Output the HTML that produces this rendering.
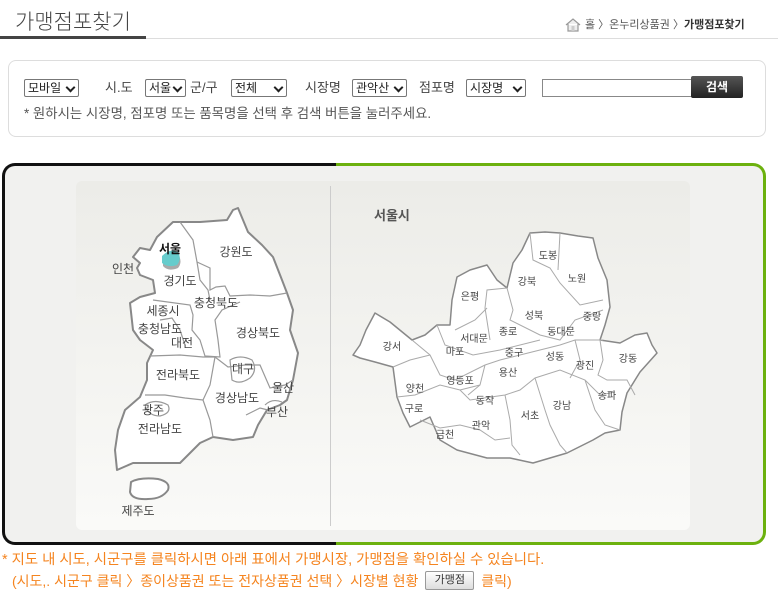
<!DOCTYPE html>
<html><head><meta charset="utf-8">
<style>
*{margin:0;padding:0;box-sizing:border-box}
body{width:778px;height:609px;background:#fff;font-family:"Liberation Sans","Noto Sans CJK KR",sans-serif;position:relative;overflow:hidden;color:#444}
.a{position:absolute;white-space:nowrap}
.sel{position:absolute;top:79px;height:18px;border:1px solid #777;background:#fff;font-size:12px;line-height:16px;padding-left:3px;color:#222;border-radius:2px;overflow:hidden}
.sel:after{content:"";position:absolute;right:4px;top:4px;width:5px;height:5px;border-right:2px solid #222;border-bottom:2px solid #222;transform:rotate(45deg)}
.lb{position:absolute;top:79px;font-size:13px;line-height:18px;color:#444}
svg text{font-family:"Liberation Sans","Noto Sans CJK KR",sans-serif}
</style></head><body>
<div class="a" style="left:15px;top:6px;font-size:21px;color:#444;font-weight:300">가맹점포찾기</div>
<div class="a" style="left:0;top:38px;width:778px;height:1px;background:#ddd"></div>
<div class="a" style="left:0;top:36px;width:146px;height:3px;background:#444"></div>
<svg class="a" style="left:565px;top:17px" width="16" height="16" viewBox="0 0 16 16"><path d="M1 8 L8 2 L15 8 M3 7 V14 H13 V7" fill="#eee" stroke="#999" stroke-width="1.2"/><rect x="6.5" y="9" width="3" height="5" fill="#ccc"/></svg>
<div class="a" style="left:585px;top:17px;font-size:11px;color:#555;line-height:16px">홀 〉온누리상품권 〉<b style="color:#333">가맹점포찾기</b></div>

<div class="a" style="left:8px;top:60px;width:758px;height:77px;border:1px solid #ddd;border-radius:8px"></div>
<div class="sel" style="left:24px;width:55px">모바일</div>
<div class="lb" style="left:105px">시.도</div>
<div class="sel" style="left:145px;width:41px">서울</div>
<div class="lb" style="left:190px">군/구</div>
<div class="sel" style="left:231px;width:56px">전체</div>
<div class="lb" style="left:305px">시장명</div>
<div class="sel" style="left:352px;width:55px">관악산</div>
<div class="lb" style="left:419px">점포명</div>
<div class="sel" style="left:466px;width:60px">시장명</div>
<div class="a" style="left:542px;top:79px;width:150px;height:18px;border:1px solid #888;background:#fff"></div>
<div class="a" style="left:691px;top:76px;width:52px;height:22px;background:linear-gradient(#555,#222);border-radius:2px;color:#fff;font-size:12px;font-weight:bold;text-align:center;line-height:22px">검색</div>
<div class="a" style="left:24px;top:102px;font-size:13.4px;color:#555">* 원하시는 시장명, 점포명 또는 품목명을 선택 후 검색 버튼을 눌러주세요.</div>

<div class="a" style="left:2px;top:163px;width:764px;height:382px;border-radius:13px;background:linear-gradient(90deg,#111 0,#111 334px,#6cb10e 334px);padding:3px">
<div style="width:100%;height:100%;border-radius:10px;background:#f1f1ef"></div></div>
<div class="a" style="left:76px;top:181px;width:614px;height:349px;border-radius:6px;background:linear-gradient(#ecece8,#fafaf8)"></div>
<div class="a" style="left:330px;top:186px;width:1px;height:340px;background:#ccc"></div>

<svg class="a" style="left:0;top:0" width="778" height="609">
<g fill="#fff" stroke="#888" stroke-width="2" stroke-linejoin="round">
<path d="M238 208 L248 232 L262 245 L273 257 L282 280 L287 293 L293 310 L290 330 L298 353 L293 380 L287 400 L280 405 L267 410 L258 425 L253 437 L233 440 L213 437 L200 443 L180 463 L133 463 L117 470 L115 450 L118 430 L125 410 L140 397 L147 380 L147 363 L153 350 L140 340 L133 330 L130 303 L140 297 L155 293 L153 280 L140 275 L137 268 L140 263 L133 257 L140 248 L150 250 L157 237 L173 222 L200 222 L227 220 L233 210 Z"/>
<path d="M131 482 Q140 477 158 479 Q171 482 168 490 Q162 499 148 499 Q132 500 130 492 Z"/>
</g>
<g fill="none" stroke="#999" stroke-width="1.2">
<path d="M180 222 L193 240 L197 262 L200 280 L208 290 L210 300"/>
<path d="M197 262 L210 268 L210 290 L216 287 L225 286 L230 296 L250 295 L270 296 L287 293"/>
<path d="M153 300 L190 305 L193 315 L192 330 L200 340 L205 356 L220 357 L218 340 L215 320 L222 310 L240 302"/>
<path d="M150 356 L180 355 L203 357 L215 357 L228 367 L245 365 L260 365 L270 388 L285 385 L293 380"/>
<path d="M215 357 L210 385 L203 400 L210 420 L213 437"/>
<path d="M145 395 L165 395 L185 398 L203 400"/>
<path d="M160 320 L172 318 L180 330 L185 345"/>
<path d="M230 360 Q240 354 252 360 Q258 370 250 378 Q240 385 232 380 Z"/>
<path d="M145 405 Q155 398 168 405 Q172 413 160 416 Q148 416 145 405 Z"/>
<path d="M265 405 Q272 398 282 402"/>
<path d="M246 415 L260 408 L268 410"/>
</g>
<path d="M163 258 Q170 250 178 254 Q183 262 178 268 Q168 272 163 266 Z" fill="#aaa"/>
<path d="M162 256 Q170 248 178 252 Q182 259 177 265 Q168 268 162 263 Z" fill="#66cccc"/>
<g font-size="12" fill="#444" text-anchor="middle">
<text x="170" y="253" font-weight="bold" fill="#111">서울</text>
<text x="123" y="273">인천</text><text x="236" y="256">강원도</text><text x="180" y="285">경기도</text>
<text x="216" y="307">충청북도</text><text x="163" y="315">세종시</text><text x="160" y="333">충청남도</text>
<text x="182" y="347">대전</text><text x="258" y="337">경상북도</text><text x="178" y="379">전라북도</text>
<text x="243" y="373">대구</text><text x="283" y="392">울산</text><text x="237" y="402">경상남도</text>
<text x="277" y="416">부산</text><text x="153" y="414">광주</text><text x="160" y="433">전라남도</text>
<text x="138" y="515">제주도</text>
</g>
<text x="374" y="220" font-size="13" font-weight="bold" fill="#555">서울시</text>
<path d="M353 355 L360 345 L366 330 L375 313 L390 322 L412 340 L425 335 L437 325 L450 325 L452 300 L457 277 L470 270 L487 265 L497 280 L507 288 L513 263 L522 250 L530 233 L545 232 L560 233 L578 236 L593 238 L598 258 L607 280 L610 307 L605 325 L600 340 L620 343 L635 335 L647 333 L652 345 L657 353 L640 372 L627 393 L622 412 L620 430 L605 433 L593 440 L567 453 L533 463 L510 458 L487 458 L457 450 L440 440 L430 417 L410 427 L403 413 L397 397 L393 367 L375 362 L360 358 Z" fill="#fff" stroke="#888" stroke-width="1.5" stroke-linejoin="round"/>
<g fill="none" stroke="#aaa" stroke-width="1">
<path d="M507 288 L487 290 L485 308 L490 340"/><path d="M530 233 L533 260 L550 268 L560 283 L580 305 L603 300"/>
<path d="M560 233 L558 270"/><path d="M507 288 L513 310 L510 320 L540 335 L560 340 L575 320 L603 310"/>
<path d="M437 325 L445 345 L473 355 L500 350 L540 340"/><path d="M487 308 L475 320 L455 330"/>
<path d="M412 340 L430 355 L440 375 L455 380 L485 365 L500 360 L520 355 L540 350 L560 345 L575 340 L603 340"/>
<path d="M393 367 L410 360 L430 355"/><path d="M397 397 L415 395 L440 385 L460 390 L480 385"/>
<path d="M420 420 L440 428 L460 425 L480 430 L495 440 L510 438"/><path d="M460 390 L470 400 L505 395 L520 390 L535 378 L560 370 L585 380 L600 395 L615 392"/>
<path d="M575 340 L580 360 L570 378"/><path d="M600 340 L603 360 L598 375 L607 380 L627 380 L635 395"/>
<path d="M505 395 L510 420 L512 445 L520 455"/><path d="M535 378 L545 410 L550 425 L560 445 L567 453"/>
<path d="M585 380 L595 410 L605 425 L620 430"/><path d="M485 365 L480 385 L468 395"/>
</g>
<g font-size="10" fill="#444" text-anchor="middle">
<text x="548" y="259">도봉</text><text x="527" y="285">강북</text><text x="577" y="282">노원</text>
<text x="470" y="300">은평</text><text x="534" y="319">성북</text><text x="592" y="320">중랑</text>
<text x="508" y="335">종로</text><text x="561" y="335">동대문</text><text x="474" y="342">서대문</text>
<text x="392" y="350">강서</text><text x="455" y="355">마포</text><text x="514" y="356">중구</text>
<text x="555" y="360">성동</text><text x="585" y="369">광진</text><text x="628" y="362">강동</text>
<text x="508" y="376">용산</text><text x="460" y="384">영등포</text><text x="415" y="392">양천</text>
<text x="607" y="399">송파</text><text x="485" y="404">동작</text><text x="562" y="409">강남</text>
<text x="414" y="412">구로</text><text x="530" y="419">서초</text><text x="481" y="429">관악</text>
<text x="445" y="438">금천</text>
</g>
</svg>

<div class="a" style="left:2px;top:548px;font-size:14.4px;color:#f5841f">* 지도 내 시도, 시군구를 클릭하시면 아래 표에서 가맹시장, 가맹점을 확인하실 수 있습니다.</div>
<div class="a" style="left:12px;top:571px;font-size:14px;color:#f5841f;line-height:20px">(시도,. 시군구 클릭 〉종이상품권 또는 전자상품권 선택 〉시장별 현황 <span style="display:inline-block;width:49px;height:19px;border:1px solid #999;border-radius:2px;background:linear-gradient(#fff,#ddd);color:#333;font-size:11px;text-align:center;line-height:17px;vertical-align:top;margin:0 3px">가맹점</span> 클릭)</div>
</body></html>
